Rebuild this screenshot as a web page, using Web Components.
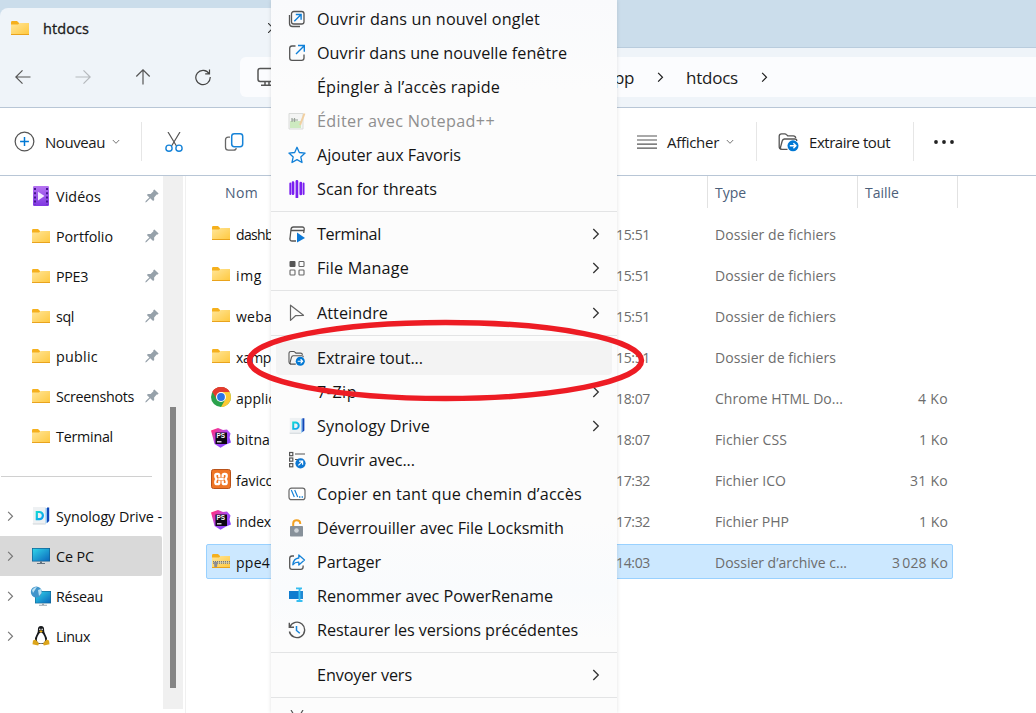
<!DOCTYPE html>
<html lang="fr">
<head>
<meta charset="utf-8">
<title>htdocs</title>
<style>
html,body{margin:0;height:100%;overflow:hidden;background:#fff}
body{font-family:"Open Sans","Noto Sans",sans-serif;color:#1b1b1b}
</style>
</head>
<body>
<file-explorer></file-explorer>
<script>
const FOLDER = '<path d="M1 3.2Q1 2 2.2 2H7l2 2v3H1z" fill="#f5b01d"/><path d="M1 5.5h7L9.5 4H19v12H1z" fill="url(#f)"/><path d="M1 15h18v1H1z" fill="#e9a31c"/><defs><linearGradient id="f" x1="0" y1="0" x2="1" y2="1"><stop offset="0" stop-color="#ffe69a"/><stop offset="1" stop-color="#ffc83d"/></linearGradient></defs>';
const PS = '<path d="M0 2.500l7-2.500 5 2 4-.5 3.500 4-1 4 1.500 5-5 2-5.500 3.200-6-3.700-1.500-6z" fill="url(#p)"/><path d="M4.500 4.500h11.500V16H4.500z" fill="#0d0714"/><path d="M6 13.800h4.500" stroke="#fff" stroke-width="1.2"/><text x="5.600" y="10.400" font-family="Liberation Sans,sans-serif" font-weight="bold" font-size="6.4" fill="#fff">PS</text><defs><linearGradient id="p" x1="0" y1="0" x2="1" y2="1"><stop offset="0.1" stop-color="#ff2f86"/><stop offset=".5" stop-color="#a94bf5"/><stop offset="1" stop-color="#7a3cff"/></linearGradient></defs>';
const SYNO = '<path d="M2 1h13v17H2z" fill="#eef1f3"/><path d="M1.500 17.500h12l1.500 1H2z" fill="#cfd6da"/><path d="M14.500 2h1.600v14.500l-1.600 1.500z" fill="#8fc8f4"/><path d="M16 1.500h2.200V15L16 17z" fill="#1046b8"/><path d="M5.800 6v7.2h2.6a3.5 3.6 0 0 0 0-7.2H4.700" fill="none" stroke="url(#s)" stroke-width="2.2"/><defs><linearGradient id="s" x1="0" y1="0" x2="1" y2="1"><stop offset="0" stop-color="#12dbd4"/><stop offset="1" stop-color="#0b9df0"/></linearGradient></defs>';
const EXTRACT = '<g fill="none" stroke="#555" stroke-width="1.3"><path d="M3.5 17.3Q1.2 17 1.2 14.8V4.2Q1.2 1.8 3.6 1.8h3.2q1 0 1.7.8l1.2 1.2h5.6q2.2 0 2.4 2.2"/><path d="M9.5 17.3H3.8q-1.6 0-1.3-2L4.2 9Q4.7 7.2 6.4 7H17q1.8 0 1.8 2"/></g><circle cx="15" cy="13.8" r="5.5" fill="#0078d4"/><path d="M11.8 13.8h6M15.4 11.3l2.5 2.5-2.5 2.5" fill="none" stroke="#fff" stroke-width="1.4"/>';
const SCREEN = '<linearGradient id="m" x1="0" y1="0" x2="1" y2="1"><stop offset="0" stop-color="#30d5e9"/><stop offset="1" stop-color="#0b68bd"/></linearGradient>';
const ICONS = {
 folder: [20,18,FOLDER],
 zip: [20,18,FOLDER+'<path d="M2 9h16v2.6H2z" fill="#d5cda8"/><path d="M2 9.6h17M2 11.2h17" stroke="#62636a" stroke-width=".9" stroke-dasharray="1 1"/><path d="M3 10h3.6l-.6 5H3.3z" fill="#8b8d96"/>'],
 video: [18,20,'<rect x="1" width="16" height="20" rx="1.2" fill="url(#v)"/><path d="M3 2v17M15 2v17" stroke="#43148e" stroke-width="2" stroke-dasharray="2 2.2"/><path d="M6 5.8v8.6l6.5-4.3z" fill="#f3eaff"/><defs><linearGradient id="v" x2="0" y2="1"><stop stop-color="#b673f2"/><stop offset="1" stop-color="#8038e2"/></linearGradient></defs>'],
 pin: [14,14,'<path d="M8.3 1.2 9.4.4l4.2 4.2-.9 1-1-.1-2.6 2.9.1 2.7-1.1 1-2.9-2.9L1.6 13l-1.3.4.4-1.3L4.4 8.4 1.9 5.9l1-1 2.7.1 2.8-2.7z" fill="#96a1aa"/>'],
 syno: [20,20,SYNO],
 pc: [20,18,'<rect x="1" y="1" width="18" height="13.5" fill="#125f91"/><rect x="1.7" y="1.7" width="16.6" height="12.1" fill="url(#m)"/><path d="M9 14.5h2v1.6H9zM6 16h8v1H6z" fill="#63727f"/>'+SCREEN],
 net: [22,20,'<rect x="5" y="5" width="16" height="12.4" fill="#146692"/><rect x="5.6" y="5.6" width="14.8" height="11.2" fill="url(#m)"/><path d="M12 17.4h2v1.4h-2zM9 18.7h8v1H9z" fill="#9aa8b2"/><circle cx="6.3" cy="6" r="5.5" fill="#4195cb"/><path d="M2 4q2-3 5-3.2L5 4 3 7zM8 4l3-1 .6 4L9 10z" fill="#b9e0f3"/>'+SCREEN],
 linux: [18,20,'<path d="M9 0Q5.7 0 5.9 4q.2 2.5-1.3 4.6Q2.2 12 3 16l3 2h6l3-2q.8-4-1.6-7.4Q12 6.500 12.100 4 12.300 0 9 0z" fill="#17191c"/><path d="M9 6.5q-1.300 0-2.200 1.700-2 3-2 5.500 0 3.600 4.200 3.700 4.200-.1 4.200-3.700 0-2.500-2-5.500Q10.300 6.500 9 6.500z" fill="#fff"/><path d="M7.200 5.200 9 4.200l1.800 1L9 6.800z" fill="#eeb111"/><path d="M1 14.500l2.500-1 3.500 4-.8 2-5.700-1.300zM17 14.500l-2.500-1-3.500 4 .8 2 5.700-1.300z" fill="#dca51b"/><circle cx="7.800" cy="3.400" r=".8" fill="#ddd"/><circle cx="10.200" cy="3.400" r=".8" fill="#ddd"/>'],
 right: [8,12,'<path d="M1.300 1l5 5-5 5" fill="none" stroke="currentColor" stroke-width="1.300"/>'],
 down: [8,6,'<path d="M.8 1 4 4.300 7.200 1" fill="none" stroke="#777" stroke-width="1"/>'],
 back: [16,16,'<path d="M15.500 8H1M7.500 1.300.8 8l6.700 6.700" fill="none" stroke="#555" stroke-width="1.200"/>'],
 fwd: [16,16,'<path d="M.5 8H15M8.500 1.300 15.200 8l-6.700 6.700" fill="none" stroke="#b5b9bd" stroke-width="1.200"/>'],
 up: [16,16,'<path d="M8 15.500V1M1.300 7.500 8 .8l6.700 6.700" fill="none" stroke="#555" stroke-width="1.200"/>'],
 reload: [18,18,'<path d="M15.200 5.800A7.200 7.200 0 1 0 16.200 9M15.500 1.500V5.800H11.200" fill="none" stroke="#444" stroke-width="1.200"/>'],
 close: [10,10,'<path d="M0 0l10 10M10 0 0 10" stroke="#333" stroke-width="1.100"/>'],
 monitor: [22,20,'<rect x="1" y="1.500" width="20" height="13" rx="2.200" fill="none" stroke="#555" stroke-width="1.500"/><path d="M8 15v3M12 15v3M4 18.200h14" stroke="#555" stroke-width="1.500"/>'],
 plus: [20,20,'<circle cx="10" cy="10" r="8.900" fill="none" stroke="#555" stroke-width="1.200"/><path d="M10 5.800v8.400M5.800 10h8.400" stroke="#0078d4" stroke-width="1.400"/>'],
 cut: [18,20,'<path d="M3 0l8.600 14.300M15 0 6.400 14.300" fill="none" stroke="#555" stroke-width="1.200"/><g fill="none" stroke="#1683d8" stroke-width="1.400"><circle cx="4" cy="16.200" r="3.100"/><circle cx="14" cy="16.200" r="3.100"/></g>'],
 copy: [20,20,'<path d="M6 5.200H4.200Q1.500 5.200 1.500 8v7.200q0 2.900 2.900 2.900h5.200q2.400 0 2.700-2" fill="none" stroke="#666" stroke-width="1.300"/><rect x="7.700" y="1.700" width="11" height="13" rx="2.600" fill="none" stroke="#1683d8" stroke-width="1.500"/>'],
 lines: [20,16,'<path d="M0 2h20M0 6h20M0 10.200h20M0 14.200h20" stroke="#555" stroke-width="1.200"/>'],
 extract: [22,20,EXTRACT],
 dots: [20,6,'<g fill="#222"><circle cx="2" cy="3" r="1.900"/><circle cx="10" cy="3" r="1.900"/><circle cx="18" cy="3" r="1.900"/></g>'],
 chrome: [20,20,'<circle cx="10" cy="10" r="10" fill="#2ba24c"/><path d="M10 10 1.340 5A10 10 0 0 1 18.660 5z" fill="#ea4335"/><path d="M1.340 5 6 12.500 10 10V5h8.660A10 10 0 0 0 1.340 5z" fill="#e33b2e"/><path d="M10 5h8.660A10 10 0 0 1 10 20l4.300-7.500z" fill="#fcc934"/><circle cx="10" cy="10" r="5" fill="#fff"/><circle cx="10" cy="10" r="3.900" fill="#2a73e8"/>'],
 ps: [20,20,PS],
 xampp: [20,20,'<rect x=".5" y=".5" width="19" height="19" rx="2" fill="#ef7524" stroke="#b8521a"/><path d="M8.300 8.200V6.300Q8.300 4.800 6.800 4.800H6Q4.300 4.800 4.300 6.500v.800Q4.300 8.800 5.500 10 4.300 11.200 4.300 12.700v.800Q4.300 15.200 6 15.200h.8q1.500 0 1.500-1.500v-1.900M11.700 8.200V6.300q0-1.500 1.500-1.500h.8q1.700 0 1.700 1.700v.8q0 1.500-1.200 2.700 1.200 1.200 1.200 2.700v.8q0 1.700-1.700 1.700h-.8q-1.500 0-1.500-1.500v-1.900M7.300 10h5.400" fill="none" stroke="#fff" stroke-width="2.300"/>'],
 newtab: [18,18,'<path d="M3 4v8.500Q3 15.500 6 15.500h7.500" transform="translate(-1.500 1)" fill="none" stroke="#555" stroke-width="1.300"/><rect x="3.500" y="1.500" width="12.500" height="12.500" rx="2.300" fill="none" stroke="#555" stroke-width="1.300"/><path d="M6.300 11.300 12.800 4.800M7.800 4.500h5.300v5.300" fill="none" stroke="#0f7fd8" stroke-width="1.400"/>'],
 newwin: [18,18,'<path d="M7.500 2H4Q1.700 2 1.700 4.300V14Q1.700 16.300 4 16.300h9.700q2.300 0 2.300-2.300v-3.500" fill="none" stroke="#555" stroke-width="1.300"/><path d="M8 10 16 2M10 1.500h6.300v6.300" fill="none" stroke="#0f7fd8" stroke-width="1.400"/>'],
 npp: [18,18,'<path d="M1 1.500h14v15.500H1z" fill="#f4f5f4" stroke="#dadcda"/><path d="M2 9h11v7H2z" fill="#cdeac0"/><path d="M4 6v4M6.500 6v4M4 8h6" stroke="#9aa49a" stroke-width="1.200"/><path d="M16.500 1.500 12 13" stroke="#f1cfa0" stroke-width="2"/>'],
 star: [18,18,'<path d="M9 1.300l2.300 5.200 5.800.6-4.300 3.800 1.200 5.600L9 13.600l-5 2.900 1.200-5.600L.9 7.100l5.800-.6z" fill="none" stroke="#0f7fd8" stroke-width="1.300" stroke-linejoin="round"/>'],
 scan: [18,18,'<path d="M5 2.700v11M8.900 1.300v16M12.800 3v11" stroke="#7a1ff0" stroke-width="2.700" stroke-linecap="round"/><path d="M2.300 3.500v10.500M15.600 3.500v10.500" stroke="#7a1ff0" stroke-width="1.900" stroke-linecap="round"/>'],
 term: [18,18,'<path d="M8 16H4.200Q1.500 16 2 13.200L3 4.500Q3.200 2 5.500 2h8.700q2.300 0 2 2.300L15.700 8M2.800 5.500h13.200" fill="none" stroke="#555" stroke-width="1.300"/><path d="M9 7.500v10l8-4.500z" fill="#0b78d6"/>'],
 grid: [18,18,'<rect x="1.500" y="2" width="6" height="6" rx="1" fill="#555"/><g fill="none" stroke="#666" stroke-width="1.100"><rect x="11" y="2.500" width="5" height="5" rx=".8"/><rect x="2" y="11" width="5" height="5" rx=".8"/><rect x="11" y="11" width="5" height="5" rx=".8"/></g>'],
 cursor: [18,18,'<path d="M2.500 1.200v15.200l5-4.700 8-.4z" fill="none" stroke="#666" stroke-width="1.200" stroke-linejoin="round"/>'],
 openwith: [18,18,'<g fill="none" stroke="#555" stroke-width="1.200"><rect x="1.600" y="1.500" width="3.200" height="3.200"/><rect x="1.600" y="7" width="3.200" height="3.200"/><rect x="1.600" y="12.600" width="3.200" height="3.200"/><path d="M7 3h10M7 8.500h3"/></g><circle cx="12.500" cy="12.300" r="5.100" fill="#0f78d2"/><path d="M10.400 14.400l4-4M11 10.200h3.600v3.600" fill="none" stroke="#fff" stroke-width="1.200"/>'],
 path: [18,18,'<rect x="1" y="3.200" width="16" height="11.500" rx="2.500" fill="#fff" stroke="#666" stroke-width="1.200"/><path d="M3.300 5l3 7M6.700 5l3 7" stroke="#1683d8" stroke-width="1.200"/><path d="M11 12h1.400M13.600 12H15" stroke="#1683d8" stroke-width="1.400"/>'],
 lock: [18,18,'<path d="M5.200 7V4.500Q5.300 1.300 8.700 1.300 12 1.300 12.200 4v1" fill="none" stroke="#f2a122" stroke-width="2"/><rect x="2" y="7" width="13" height="10.500" rx=".8" fill="#87919a"/><circle cx="8.500" cy="11.500" r="2.300" fill="#cdd3d8"/>'],
 share: [18,18,'<path d="M6 3H4Q1.700 3 1.700 5.300V14Q1.700 16.300 4 16.300h8.800q2.300 0 2.300-2.300v-1.500" fill="none" stroke="#555" stroke-width="1.300"/><path d="M10.800 2 16.500 7l-5.700 5V9.200Q7 9 4.800 11.800 5.500 5.500 10.800 5z" fill="none" stroke="#1683d8" stroke-width="1.300" stroke-linejoin="round"/>'],
 rename: [18,18,'<rect x="1" y="4" width="9.700" height="8" fill="#0f7ccf"/><path d="M10 4h5v8h-5z" fill="#2189d4"/><path d="M8 1.300h3.300l.7.700.7-.7H14M11.500 2v12M8.500 14h6" fill="none" stroke="#36bdf0" stroke-width="1.800"/>'],
 history: [18,18,'<path d="M1.300 1.800v4.500H6M1.800 6A7.700 7.700 0 1 1 1.400 10.500" fill="none" stroke="#555" stroke-width="1.400"/><path d="M8.500 5v4.500l3.300 2.800" fill="none" stroke="#1683d8" stroke-width="1.500"/>'],
 none: [18,18,'']
};

/* Builds a custom element from its styles and a markup function. */
function define(name, css, html){
  customElements.define(name, class extends HTMLElement{
    connectedCallback(){
      if(this.shadowRoot) return;
      this.attachShadow({mode:'open'}).innerHTML = `<style>${css}</style>${html(this)}`;
    }
  });
}
const at = (e,n,d='') => e.getAttribute(n) ?? d;

define('x-icon', ':host{display:block;flex:none}svg{display:block}', e => {
  const [w,h,body] = ICONS[at(e,'name','none')];
  const W = +at(e,'size',w);
  return `<svg width="${W}" height="${W*h/w}" viewBox="0 0 ${w} ${h}">${body}</svg>`;
});

/* A single line of text whose tracking is adjusted to the width given in "w". */
customElements.define('fit-text', class extends HTMLElement{
  connectedCallback(){
    if(this.shadowRoot) return;
    this.attachShadow({mode:'open'}).innerHTML =
      '<style>:host{display:block;flex:none;white-space:pre}span{display:inline-block}</style><span><slot></slot></span>';
    const w = +this.getAttribute('w');
    if(w){
      const s = this.shadowRoot.querySelector('span');
      const n = this.textContent.length;
      s.style.letterSpacing = (w - s.getBoundingClientRect().width)/n + 'px';
    }
  }
});

define('side-item', `
 :host{display:flex;align-items:center;height:40px;width:162px;box-sizing:border-box;font-size:14.3px;color:#111}
 :host([active]){background:#d9d9d9;border-radius:0 2px 2px 0}
 .c{width:31px;flex:none;color:#777;box-sizing:border-box;padding-left:7px}
 .i{width:20px;flex:none;display:flex;justify-content:center;margin-right:5px}
 .t{flex:1;min-width:0}
 .p{flex:none;margin-right:3px}`,
 e => `<div class="c">${e.hasAttribute('open')?'<x-icon name="right" size="7"></x-icon>':''}</div>
 <div class="i"><x-icon name="${at(e,'icon')}"></x-icon></div><div class="t"><fit-text w="${at(e,'w')}">${at(e,'label')}</fit-text></div>
 ${e.hasAttribute('pinned')?'<x-icon class="p" name="pin"></x-icon>':''}`);

define('file-row', `
 :host{display:grid;grid-template-columns:29px 380px 99px 151px 82px;width:747px;box-sizing:border-box;height:35px;margin:0 0 6px 20px;align-items:center;border:1px solid transparent;border-radius:2px;font-size:14px;color:#6d6d6d}
 :host([selected]){background:#cce8ff;border-color:#99d1ff}
 .i{padding-left:4px;position:relative;top:-1px}
 div{padding-top:1px}
 .n{color:#111}
 .s{display:flex;justify-content:flex-end}`,
 e => `<div class="i"><x-icon name="${at(e,'icon')}"></x-icon></div><div class="n"><fit-text w="${at(e,'nw')}">${at(e,'label')}</fit-text></div>
 <div><fit-text w="34">${at(e,'time')}</fit-text></div><div><fit-text w="${at(e,'tw')}">${at(e,'type')}</fit-text></div>
 <div class="s">${at(e,'size')?`<fit-text w="${at(e,'sw')}">${at(e,'size')}</fit-text>`:''}</div>`);

define('menu-item', `
 :host{display:flex;align-items:center;height:34px;flex:none;margin:0 5px;padding:0 12px;border-radius:4px;font-size:16.2px;color:#141414}
 :host([hover]){background:#f3f3f3}
 :host([disabled]){color:#8f8f8f}
 .i{margin-right:11px}
 .t{flex:1}
 .r{color:#333}`,
 e => `<x-icon class="i" name="${at(e,'icon','none')}" size="18"></x-icon><div class="t">${at(e,'label')?`<fit-text w="${at(e,'w')}">${at(e,'label')}</fit-text>`:''}</div>
 ${e.hasAttribute('sub')?'<x-icon class="r" name="right"></x-icon>':''}`);

define('menu-line', ':host{display:block;flex:none;height:1px;margin:5px 0;background:#e3e4e5}', () => '');

define('context-menu', `
 :host{position:absolute;left:271px;top:0;width:346px;height:713px;box-sizing:border-box;padding-top:2px;display:flex;flex-direction:column;overflow:hidden;
 box-shadow:0 0 4px rgba(0,0,0,.12);
 background:linear-gradient(#f9fafc,#fcfcfc 90px,#fcfcfc 520px,#f9fbfd 590px,#fcfcfc 640px)}`, () => '<slot></slot>');

define('tab-strip', `
 :host{display:block;height:48px;box-sizing:border-box;padding-top:8px;background:#cbddeb;border-bottom:1px solid #b9ccdd;font-size:14.500px}
 .tab{height:40px;width:420px;box-sizing:border-box;background:#eff4f9;border-radius:8px 8px 0 0;display:flex;align-items:center;padding-left:10px}
 .n{width:225px;margin-left:13px;-webkit-text-stroke:.3px}`,
 () => `<div class="tab"><x-icon name="folder"></x-icon><div class="n"><fit-text w="46">htdocs</fit-text></div><x-icon name="close"></x-icon></div>`);

define('nav-bar', `
 :host{display:flex;align-items:center;height:60px;box-sizing:border-box;background:#eff4f9;border-bottom:1px solid #b8c6d6;padding:0 0 1px 15px}
 .b{width:60px;flex:none}
 .b.u{width:59px}
 .b.l{width:46px}
 .a{flex:1;height:40px;background:#fbfcfe;border-radius:6px 0 0 6px;display:flex;align-items:center;font-size:17px}
 .m{width:357px;padding-left:17px;flex:none}
 .g1{margin:0 22px 0 23px}.g2{margin-left:23px}`,
 () => `<x-icon class="b" name="back"></x-icon><x-icon class="b" name="fwd"></x-icon><x-icon class="b u" name="up"></x-icon><x-icon class="b l" name="reload"></x-icon>
 <div class="a"><x-icon class="m" name="monitor"></x-icon><fit-text w="20">pp</fit-text><x-icon class="g1" name="right" size="7"></x-icon><fit-text w="52">htdocs</fit-text><x-icon class="g2" name="right" size="7"></x-icon></div>`);

define('command-bar', `
 :host{display:flex;align-items:center;height:68px;box-sizing:border-box;background:#fff;border-bottom:1px solid #b8c6d6;padding-left:14px;font-size:15px}
 .v{width:1px;height:39px;background:#e6e6e6;flex:none}`,
 () => `<x-icon name="plus" size="21"></x-icon><fit-text w="60" style="margin-left:10px">Nouveau</fit-text><x-icon name="down" style="margin:0 21px 0 7px"></x-icon>
 <div class="v"></div><x-icon name="cut" style="margin:0 41px 0 23px"></x-icon><x-icon name="copy" style="margin-right:393px"></x-icon>
 <x-icon name="lines"></x-icon><fit-text w="52" style="margin-left:10px">Afficher</fit-text><x-icon name="down" style="margin:0 22px 0 7px"></x-icon>
 <div class="v"></div><x-icon name="extract" style="margin-left:21px"></x-icon><fit-text w="81" style="margin:0 23px 0 9px">Extraire tout</fit-text><div class="v"></div><x-icon name="dots" style="margin-left:20px"></x-icon>`);

define('side-bar', `
 :host{display:flex;width:185px;height:537px;flex:none;box-sizing:border-box}
 .l{width:163px}
 .l hr{border:0;height:1px;background:#d0d0d0;margin:20px 11px 19px 1px}
 .bar{width:20px;height:533px;background:#f0f0f0;box-sizing:border-box;padding:231px 0 0 7px}
 .bar i{display:block;width:6px;height:281px;background:#858585}`,
 () => `<div class="l"><slot></slot><hr><slot name="roots"></slot></div><div class="bar"><i></i></div>`);

define('list-header', `
 :host{display:flex;height:32px;font-size:14px;color:#4c607a;align-items:center}
 div{height:32px;box-sizing:border-box;border-right:1px solid #e2e2e2;display:flex;align-items:center;padding:0 0 0 7px}`,
 () => `<div style="width:522px;padding-left:39px"><fit-text w="33">Nom</fit-text></div><div style="width:150px"><fit-text w="31">Type</fit-text></div><div style="width:100px"><fit-text w="34">Taille</fit-text></div>`);

define('red-ring', ':host{position:absolute;left:240px;top:314px}svg{display:block}',
 () => '<svg width="412" height="94"><ellipse cx="205.500" cy="46.500" rx="196" ry="38" fill="none" stroke="#ed1c24" stroke-width="5.500"/></svg>');

define('file-explorer', `
 :host{display:block;position:relative;width:1036px;height:713px;overflow:hidden;background:#fff}
 main{display:flex}
 .list{flex:1;border-left:1px solid #f0f0f0;height:537px}
 .rows{padding-top:8px}`,
 () => {
  const side = [['video','Vidéos',45,1],['folder','Portfolio',57,1],['folder','PPE3',32,1],['folder','sql',18,1],['folder','public',42,1],['folder','Screenshots',78,1],['folder','Terminal',57,0]];
  const roots = [['syno','Synology Drive -',106],['pc','Ce PC',38],['net','Réseau',47],['linux','Linux',34]];
  const rows = [
   ['folder','dashb',37,'15:51','Dossier de fichiers',121,'',0],['folder','img',26,'15:51','Dossier de fichiers',121,'',0],
   ['folder','weba',36,'15:51','Dossier de fichiers',121,'',0],['folder','xamp',35,'15:51','Dossier de fichiers',121,'',0],
   ['chrome','applic',39,'18:07','Chrome HTML Do...',128,'4 Ko',30],['ps','bitna',34,'18:07','Fichier CSS',72,'1 Ko',29],
   ['xampp','favico',38,'17:32','Fichier ICO',71,'31 Ko',38],['ps','index',35,'17:32','Fichier PHP',74,'1 Ko',29],
   ['zip','ppe4',34,'14:03','Dossier d’archive c...',132,'3\u202f028 Ko',56]];
  const menu = [
   ['newtab','Ouvrir dans un nouvel onglet',223],['newwin','Ouvrir dans une nouvelle fenêtre',250],['none','Épingler à l’accès rapide',183],
   ['npp','Éditer avec Notepad++',178,'disabled'],['star','Ajouter aux Favoris',144],['scan','Scan for threats',120],0,
   ['term','Terminal',64,'sub'],['grid','File Manage',92,'sub'],0,['cursor','Atteindre',71,'sub'],0,
   ['extract','Extraire tout...',106,'hover'],['none','7-Zip',40,'sub'],['syno','Synology Drive',113,'sub'],['openwith','Ouvrir avec...',98],
   ['path','Copier en tant que chemin d’accès',265],['lock','Déverrouiller avec File Locksmith',247],['share','Partager',64],
   ['rename','Renommer avec PowerRename',236],['history','Restaurer les versions précédentes',261],0,['none','Envoyer vers',95,'sub'],0,['cut','',0]];
  return `<tab-strip></tab-strip><nav-bar></nav-bar><command-bar></command-bar>
  <main><side-bar>${side.map(s=>`<side-item icon="${s[0]}" label="${s[1]}" w="${s[2]}" ${s[3]?'pinned':''}></side-item>`).join('')}
  ${roots.map(s=>`<side-item slot="roots" open icon="${s[0]}" label="${s[1]}" w="${s[2]}" ${s[0]=='pc'?'active':''}></side-item>`).join('')}</side-bar>
  <div class="list"><list-header></list-header><div class="rows">${rows.map(r=>`<file-row icon="${r[0]}" label="${r[1]}" nw="${r[2]}" time="${r[3]}" type="${r[4]}" tw="${r[5]}" size="${r[6]}" sw="${r[7]}" ${r[0]=='zip'?'selected':''}></file-row>`).join('')}</div></div></main>
  <context-menu>${menu.map(m=>m?`<menu-item icon="${m[0]}" label="${m[1]}" w="${m[2]}" ${m[3]||''}></menu-item>`:'<menu-line></menu-line>').join('')}</context-menu>
  <red-ring></red-ring>`;
 });
</script>
</body>
</html>
